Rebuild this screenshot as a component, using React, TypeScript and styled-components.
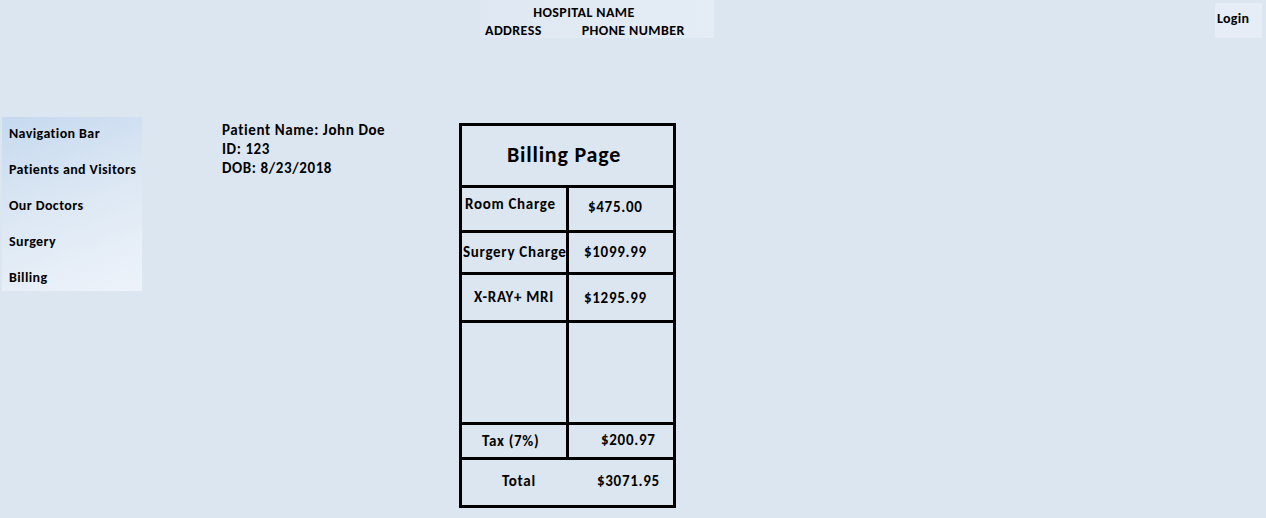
import React from "react";
import styled, { createGlobalStyle } from "styled-components";

const Global = createGlobalStyle`
  html, body { margin: 0; padding: 0; }
  body {
    background: #dce6f1;
    font-family: Carlito, Lato, "Liberation Sans", sans-serif;
    font-weight: 700;
    color: #000;
    width: 1266px;
    height: 518px;
    overflow: hidden;
  }
`;

const Page = styled.div`
  width: 1266px;
  height: 518px;
  display: flex;
  flex-direction: column;
`;

const TopBar = styled.header`
  display: flex;
  align-items: flex-start;
  height: 38px;
`;

const HospitalBox = styled.div`
  margin-left: 480px;
  width: 234px;
  height: 38px;
  box-sizing: border-box;
  background: linear-gradient(90deg, #dfe8f2 0%, #e4ecf5 100%);
  padding-top: 4px;
  font-size: 14px;
  letter-spacing: 0.4px;
  line-height: 18px;
`;

const CenterLine = styled.div`
  text-align: center;
  padding-right: 26px;
`;

const ContactLine = styled.div`
  display: flex;
  gap: 40px;
  padding-left: 5px;
`;

const LoginBox = styled.div`
  margin-left: auto;
  margin-right: 4px;
  margin-top: 3px;
  width: 47px;
  height: 35px;
  box-sizing: border-box;
  background: #e6edf6;
  font-size: 14px;
  letter-spacing: 0.3px;
  padding: 7px 0 0 2px;
`;

const Main = styled.main`
  display: flex;
  align-items: flex-start;
  margin-top: 79px;
`;

const Nav = styled.nav`
  margin-left: 2px;
  width: 140px;
  height: 174px;
  box-sizing: border-box;
  background: linear-gradient(160deg, #c6d9ef 0%, #dde8f4 50%, #eef3fa 100%);
  display: flex;
  flex-direction: column;
  padding: 8px 0 0 7px;
  overflow: hidden;
`;

const NavItem = styled.div`
  flex-shrink: 0;
  font-size: 14px;
  letter-spacing: 0.4px;
  height: 36px;
  line-height: 17px;
  white-space: nowrap;
`;

const PatientInfo = styled.div`
  margin-left: 80px;
  margin-top: 4px;
  font-size: 15px;
  letter-spacing: 0.6px;
  line-height: 19px;
  width: 237px;
`;

const Bill = styled.div`
  margin-top: 6px;
  width: 211px;
  border: 3px solid #000;
  display: flex;
  flex-direction: column;
`;

const Title = styled.div`
  height: 59px;
  display: flex;
  align-items: center;
  justify-content: center;
  font-size: 22px;
  letter-spacing: 0.8px;
  padding: 0 7px 2px 0;
  box-sizing: border-box;
`;

const Row = styled.div<{ $h: number; $divider?: boolean }>`
  height: ${(p) => p.$h}px;
  border-top: 3px solid #000;
  display: grid;
  grid-template-columns: 104px ${(p) => (p.$divider ? "3px" : "0px")} 1fr;
`;

const Divider = styled.div`
  background: #000;
`;

const Cell = styled.div<{ $pt: number; $pl?: number; $center?: boolean }>`
  font-size: 15px;
  letter-spacing: 0.7px;
  line-height: 17px;
  padding-top: ${(p) => p.$pt}px;
  padding-left: ${(p) => p.$pl ?? 0}px;
  text-align: ${(p) => (p.$center ? "center" : "left")};
  white-space: nowrap;
`;

const charges = [
  { label: "Room Charge", value: "$475.00", h: 42, pt: 8, lpl: 3, center: false, vpt: 11, vpl: 19 },
  { label: "Surgery Charge", value: "$1099.99", h: 39, pt: 11, lpl: 1, center: false, vpt: 11, vpl: 15 },
  { label: "X-RAY+ MRI", value: "$1295.99", h: 45, pt: 14, lpl: 0, center: true, vpt: 15, vpl: 15 },
];

export default function App() {
  return (
    <>
      <Global />
      <Page>
        <TopBar>
          <HospitalBox>
            <CenterLine>HOSPITAL NAME</CenterLine>
            <ContactLine>
              <span>ADDRESS</span>
              <span>PHONE NUMBER</span>
            </ContactLine>
          </HospitalBox>
          <LoginBox>Login</LoginBox>
        </TopBar>
        <Main>
          <Nav>
            <NavItem>Navigation Bar</NavItem>
            <NavItem>Patients and Visitors</NavItem>
            <NavItem>Our Doctors</NavItem>
            <NavItem>Surgery</NavItem>
            <NavItem>Billing</NavItem>
          </Nav>
          <PatientInfo>
            <div>Patient Name: John Doe</div>
            <div>ID: 123</div>
            <div>DOB: 8/23/2018</div>
          </PatientInfo>
          <Bill>
            <Title>Billing Page</Title>
            {charges.map((c) => (
              <Row key={c.label} $h={c.h} $divider>
                <Cell $pt={c.pt} $pl={c.lpl} $center={c.center}>{c.label}</Cell>
                <Divider />
                <Cell $pt={c.vpt} $pl={c.vpl}>{c.value}</Cell>
              </Row>
            ))}
            <Row $h={99} $divider>
              <Cell $pt={0} />
              <Divider />
              <Cell $pt={0} />
            </Row>
            <Row $h={32} $divider>
              <Cell $pt={8} $pl={20}>Tax (7%)</Cell>
              <Divider />
              <Cell $pt={7} $pl={32}>$200.97</Cell>
            </Row>
            <Row $h={45} $divider={false}>
              <Cell $pt={13} $pl={40}>Total</Cell>
              <div />
              <Cell $pt={13} $pl={31}>$3071.95</Cell>
            </Row>
          </Bill>
        </Main>
      </Page>
    </>
  );
}
